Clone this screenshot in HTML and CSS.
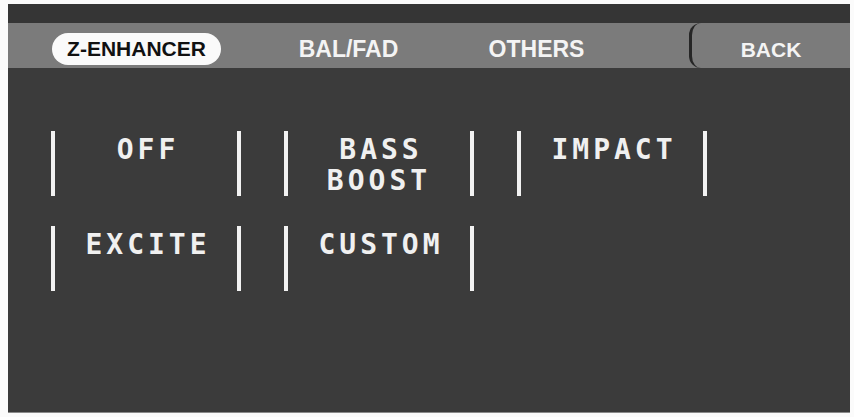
FILE: index.html
```html
<!DOCTYPE html>
<html lang="en">
<head>
    <meta charset="UTF-8">
    <meta name="viewport" content="width=device-width, initial-scale=1.0">
    <title>Audio Settings</title>
    <link rel="stylesheet" href="styles.css">
</head>
<body>
    <div class="screen">
        <div class="status-bar"></div>

        <!-- Tab strip -->
        <nav class="tabs">
            <span class="tab tab-active">Z-ENHANCER</span>
            <span class="tab tab-bal">BAL/FAD</span>
            <span class="tab tab-others">OTHERS</span>
            <span class="tab back-btn">BACK</span>
        </nav>

        <!-- Z-Enhancer presets -->
        <div class="presets">
            <div class="preset">OFF</div>
            <div class="preset">BASS<br>BOOST</div>
            <div class="preset">IMPACT</div>
            <div class="preset">EXCITE</div>
            <div class="preset">CUSTOM</div>
        </div>
    </div>
</body>
</html>
```

FILE: styles.css
```css
/* General Styles */
* {
    margin: 0;
    padding: 0;
    box-sizing: border-box;
}

body {
    font-family: "Liberation Sans", Arial, sans-serif;
    background-color: #fbfbfb;
}

.screen {
    width: 842px;
    height: 409px;
    margin: 4px 0 0 8px;
    background-color: #3b3b3b;
    border-bottom: 1px solid #8a8a8a;
}

.status-bar {
    height: 19px;
    background-color: #353535;
}

/* Tab Styles */
.tabs {
    display: flex;
    align-items: center;
    height: 45px;
    background-color: #7b7b7b;
}

.tab {
    color: #f4f4f4;
    font-size: 23px;
    font-weight: bold;
    text-align: center;
    width: 177px;
    padding-top: 8px;
}

.tab-active {
    width: 169px;
    height: 32px;
    line-height: 32px;
    margin: 6px 0 0 44px;
    padding-top: 0;
    background-color: #fafafa;
    color: #111;
    font-size: 21px;
    border-radius: 16px;
}

.tab-bal {
    margin-left: 39px;
}

.tab-others {
    margin-left: 11px;
}

.back-btn {
    width: 161px;
    height: 45px;
    line-height: 45px;
    margin-left: auto;
    padding-top: 4px;
    font-size: 21px;
    border-left: 3px solid #262626;
    border-radius: 12px 0 0 12px;
}

/* Preset Buttons */
.presets {
    display: grid;
    grid-template-columns: repeat(3, 190px);
    grid-auto-rows: 65px;
    column-gap: 43px;
    row-gap: 30px;
    padding: 63px 0 0 43px;
}

.preset {
    border-left: 4px solid #f2f2f2;
    border-right: 4px solid #f2f2f2;
    padding-top: 3px;
    color: #f0f0f0;
    font-family: "DejaVu Sans Mono", monospace;
    font-size: 28px;
    font-weight: bold;
    line-height: 31px;
    letter-spacing: 4px;
    text-indent: 4px;
    text-align: center;
}
```
